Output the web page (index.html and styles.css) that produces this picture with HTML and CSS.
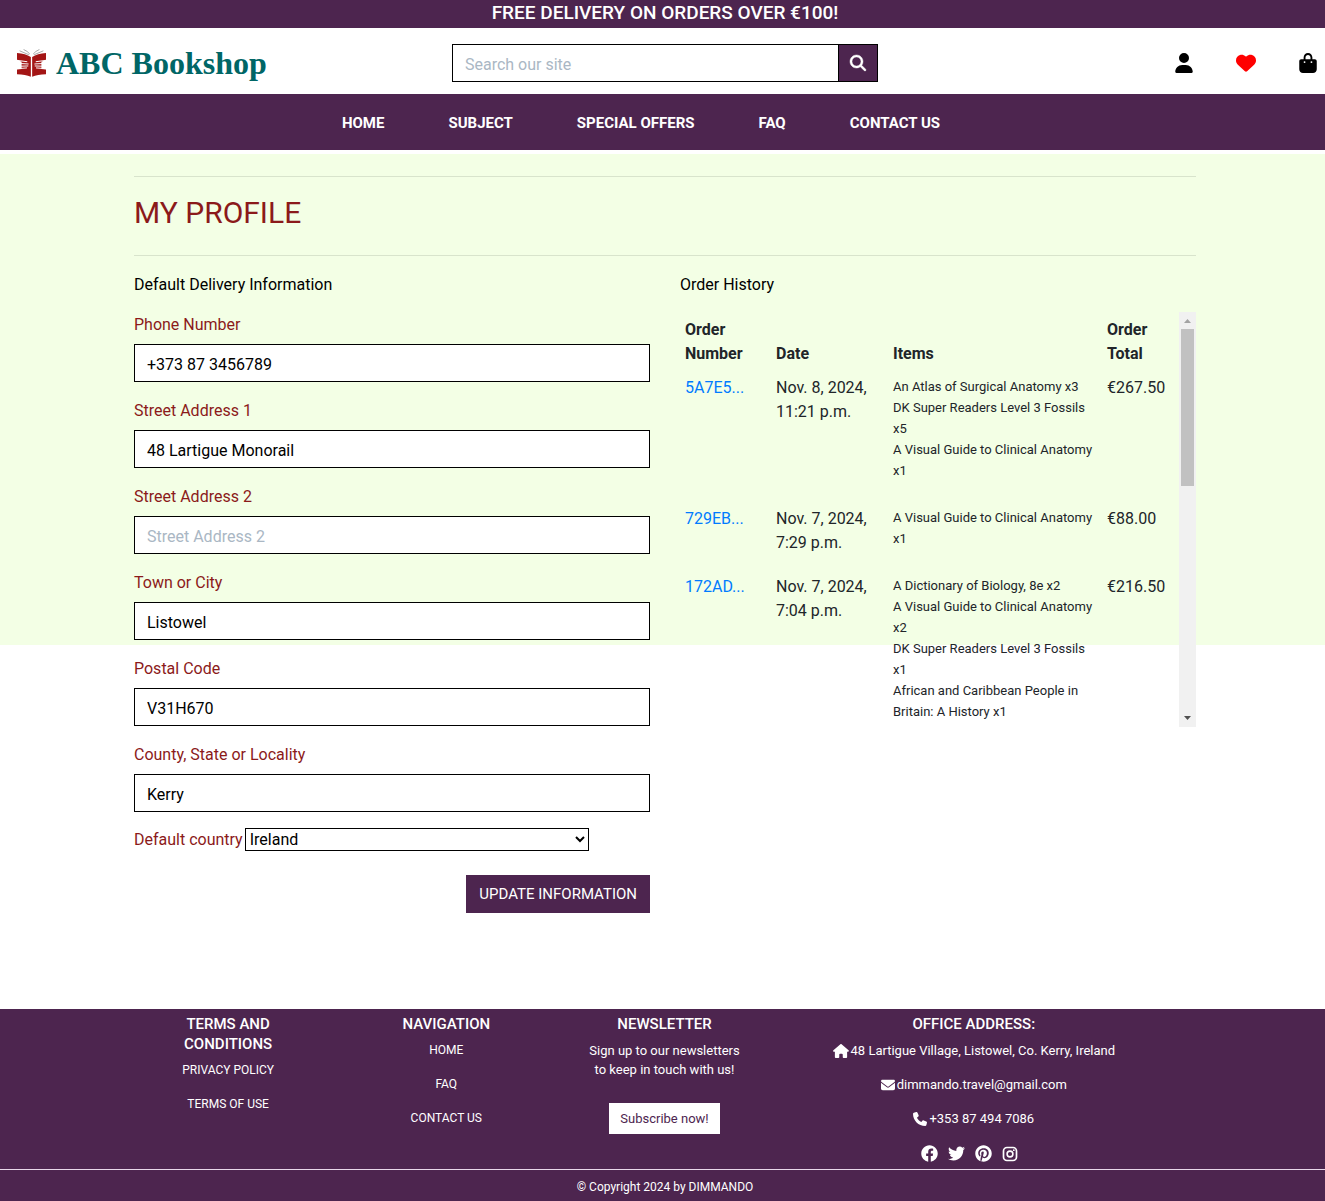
FILE: index.html
```html
<!DOCTYPE html>
<html lang="en">
<head>
<meta charset="utf-8">
<meta name="viewport" content="width=device-width, initial-scale=1">
<title>ABC Bookshop - My Profile</title>
<link rel="stylesheet" href="styles.css">
</head>
<body>
<div class="banner">FREE DELIVERY ON ORDERS OVER €100!</div>

<header class="topbar">
  <a class="brand" href="#">
    <svg class="brand-mark" viewBox="0 0 88 84" aria-hidden="true">
      <g fill="none" stroke="#a8a8a8" stroke-width="3">
        <path d="M8 5L36 17M20 1Q32 6 39 15M80 5L52 17M68 1Q56 6 49 15"/>
      </g>
      <path fill="#a31515" d="M0 12Q26 14 42 24V84Q26 76 0 76ZM88 12Q62 14 46 24V84Q62 76 88 76Z"/>
      <g fill="none" stroke="#fff" stroke-width="3" stroke-linecap="round">
        <path d="M0 34L30 38M0 43L34 45M0 52L33 51M2 59L29 57M88 34L58 38M88 43L54 45M88 52L55 51M86 59L59 57"/>
      </g>
      <path fill="#fff" d="M0 32L14 38V60L0 62ZM88 32L74 38V60L88 62Z"/>
    </svg>
    <span>ABC Bookshop</span>
  </a>
  <form class="search" role="search">
    <input class="search-input" type="text" placeholder="Search our site" aria-label="Search our site">
    <button class="search-button" type="submit" aria-label="Search">
      <svg viewBox="0 0 512 512" width="16" height="16" aria-hidden="true"><path fill="currentColor" stroke="currentColor" stroke-width="14" d="M416 208c0 45.900-14.900 88.300-40 122.700L502.600 457.400c12.500 12.500 12.500 32.800 0 45.300s-32.800 12.500-45.300 0L330.700 376c-34.400 25.200-76.800 40-122.700 40C93.100 416 0 322.900 0 208S93.100 0 208 0S416 93.100 416 208zM208 352a144 144 0 1 0 0-288 144 144 0 1 0 0 288z"/></svg>
    </button>
  </form>
  <div class="account">
    <a href="#" aria-label="My account"><svg viewBox="0 0 448 512" width="18" height="20" aria-hidden="true"><path fill="currentColor" d="M224 256A128 128 0 1 0 224 0a128 128 0 1 0 0 256zm-45.700 48C79.800 304 0 383.800 0 482.300C0 498.700 13.300 512 29.700 512H418.300c16.400 0 29.700-13.300 29.700-29.700C448 383.800 368.200 304 269.700 304H178.300z"/></svg></a>
    <a class="wishlist" href="#" aria-label="Wishlist"><svg viewBox="0 0 512 512" width="20" height="20" aria-hidden="true"><path fill="currentColor" d="M47.600 300.400L228.300 469.100c7.500 7 17.400 10.900 27.700 10.900s20.200-3.900 27.700-10.900L464.400 300.400c30.400-28.300 47.600-68 47.600-109.500v-5.800c0-69.900-50.500-129.500-119.400-141C347 36.500 300.600 51.400 268 84L256 96 244 84c-32.600-32.600-79-47.500-124.600-39.900C50.500 55.600 0 115.200 0 185.100v5.800c0 41.500 17.200 81.200 47.600 109.500z"/></svg></a>
    <a href="#" aria-label="Shopping bag"><svg viewBox="0 0 448 512" width="18" height="20" aria-hidden="true"><path fill="currentColor" d="M160 112c0-35.300 28.700-64 64-64s64 28.700 64 64v48H160V112zm-48 48H48c-26.500 0-48 21.500-48 48V416c0 53 43 96 96 96H352c53 0 96-43 96-96V208c0-26.500-21.500-48-48-48H336V112C336 50.100 285.900 0 224 0S112 50.100 112 112v48zm24 48a24 24 0 1 1 0 48 24 24 0 1 1 0-48zm152 24a24 24 0 1 1 48 0 24 24 0 1 1 -48 0z"/></svg></a>
  </div>
</header>

<nav class="mainnav" aria-label="Main">
  <a href="#">HOME</a>
  <a href="#">SUBJECT</a>
  <a href="#">SPECIAL OFFERS</a>
  <a href="#">FAQ</a>
  <a href="#">CONTACT US</a>
</nav>

<main class="profile">
  <h1 class="page-title">MY PROFILE</h1>
  <div class="columns">
    <section>
      <h2 class="section-title">Default Delivery Information</h2>
      <form class="delivery">
        <label for="phone">Phone Number</label>
        <input id="phone" type="text" value="+373 87 3456789">
        <label for="street1">Street Address 1</label>
        <input id="street1" type="text" value="48 Lartigue Monorail">
        <label for="street2">Street Address 2</label>
        <input id="street2" type="text" placeholder="Street Address 2">
        <label for="town">Town or City</label>
        <input id="town" type="text" value="Listowel">
        <label for="postcode">Postal Code</label>
        <input id="postcode" type="text" value="V31H670">
        <label for="county">County, State or Locality</label>
        <input id="county" type="text" value="Kerry">
        <div class="country">
          <label for="country">Default country</label>
          <select id="country"><option>Ireland</option></select>
        </div>
        <button class="update" type="submit">UPDATE INFORMATION</button>
      </form>
    </section>
    <section>
      <h2 class="section-title">Order History</h2>
      <div class="history">
        <table>
          <colgroup><col class="c-number"><col class="c-date"><col class="c-items"><col class="c-total"></colgroup>
          <thead>
            <tr><th>Order Number</th><th>Date</th><th>Items</th><th>Order Total</th></tr>
          </thead>
          <tbody>
            <tr>
              <td><a href="#">5A7E5...</a></td>
              <td>Nov. 8, 2024, 11:21 p.m.</td>
              <td><ul><li>An Atlas of Surgical Anatomy x3</li><li>DK Super Readers Level 3 Fossils x5</li><li>A Visual Guide to Clinical Anatomy x1</li></ul></td>
              <td>€267.50</td>
            </tr>
            <tr>
              <td><a href="#">729EB...</a></td>
              <td>Nov. 7, 2024, 7:29 p.m.</td>
              <td><ul><li>A Visual Guide to Clinical Anatomy x1</li></ul></td>
              <td>€88.00</td>
            </tr>
            <tr>
              <td><a href="#">172AD...</a></td>
              <td>Nov. 7, 2024, 7:04 p.m.</td>
              <td><ul><li>A Dictionary of Biology, 8e x2</li><li>A Visual Guide to Clinical Anatomy x2</li><li>DK Super Readers Level 3 Fossils x1</li><li>African and Caribbean People in Britain: A History x1</li></ul></td>
              <td>€216.50</td>
            </tr>
          </tbody>
        </table>
        <div class="scrollbar" aria-hidden="true">
          <svg viewBox="0 0 17 17" width="17" height="17"><path fill="#a3a3a3" d="M5 11L8.500 7L12 11Z"/></svg>
          <div class="scroll-track"><div class="scroll-thumb"></div></div>
          <svg viewBox="0 0 17 17" width="17" height="17"><path fill="#505050" d="M5 6L8.500 10L12 6Z"/></svg>
        </div>
      </div>
    </section>
  </div>
</main>

<footer class="footer">
  <div class="footer-columns">
    <section>
      <h3>TERMS AND<br>CONDITIONS</h3>
      <ul class="footer-list links">
        <li><a href="#">PRIVACY POLICY</a></li>
        <li><a href="#">TERMS OF USE</a></li>
      </ul>
    </section>
    <section>
      <h3>NAVIGATION</h3>
      <ul class="footer-list links">
        <li><a href="#">HOME</a></li>
        <li><a href="#">FAQ</a></li>
        <li><a href="#">CONTACT US</a></li>
      </ul>
    </section>
    <section>
      <h3>NEWSLETTER</h3>
      <p>Sign up to our newsletters<br>to keep in touch with us!</p>
      <button class="subscribe" type="button">Subscribe now!</button>
    </section>
    <section>
      <h3>OFFICE ADDRESS:</h3>
      <ul class="footer-list">
        <li><svg viewBox="0 0 576 512" width="16" height="14" aria-hidden="true"><path fill="currentColor" d="M575.800 255.500c0 18-15 32.100-32 32.100h-32l.700 160.200c0 2.700-.200 5.400-.500 8.100V472c0 22.100-17.900 40-40 40H392c-22.100 0-40-17.900-40-40V384c0-17.700-14.300-32-32-32H256c-17.700 0-32 14.300-32 32v88c0 22.100-17.900 40-40 40H104c-22.100 0-40-17.900-40-40V287.600H32c-18 0-32-14-32-32.100c0-9 3-17 10-24L266.400 8c7-7 15-8 22-8s15 2 21 7L564.800 231.500c8 7 12 15 11 24z"/></svg><span>48 Lartigue Village, Listowel, Co. Kerry, Ireland</span></li>
        <li><svg viewBox="0 0 512 512" width="14" height="14" aria-hidden="true"><path fill="currentColor" d="M48 64C21.500 64 0 85.500 0 112c0 15.100 7.100 29.300 19.200 38.400L236.800 313.600c11.400 8.500 27 8.500 38.400 0L492.800 150.400c12.100-9.100 19.200-23.300 19.200-38.400c0-26.500-21.500-48-48-48H48zM0 176V384c0 35.300 28.700 64 64 64H448c35.300 0 64-28.700 64-64V176L294.400 339.200c-22.800 17.100-54 17.100-76.800 0L0 176z"/></svg><a href="mailto:dimmando.travel@gmail.com">dimmando.travel@gmail.com</a></li>
        <li><svg viewBox="0 0 512 512" width="14" height="14" aria-hidden="true"><path fill="currentColor" d="M164.900 24.600c-7.700-18.600-28-28.500-47.400-23.200l-88 24C12.100 30.200 0 46 0 64C0 311.400 200.600 512 448 512c18 0 33.800-12.100 38.600-29.500l24-88c5.300-19.400-4.600-39.700-23.200-47.400l-96-40c-16.300-6.800-35.200-2.100-46.300 11.600L304.700 368C234.300 334.700 177.300 277.700 144 207.300L193.300 167c13.700-11.200 18.400-30 11.600-46.300l-40-96z"/></svg><span>+353 87 494 7086</span></li>
      </ul>
      <div class="social">
        <a href="#" aria-label="Facebook"><svg viewBox="0 0 512 512" width="17" height="17" aria-hidden="true"><path fill="currentColor" d="M504 256C504 119 393 8 256 8S8 119 8 256c0 123.780 90.690 226.380 209.250 245V327.690h-63V256h63v-54.640c0-62.150 37-96.480 93.670-96.480 27.140 0 55.520 4.840 55.520 4.840v61h-31.280c-30.800 0-40.410 19.120-40.410 38.730V256h68.780l-11 71.690h-57.780V501C413.310 482.380 504 379.780 504 256z"/></svg></a>
        <a href="#" aria-label="Twitter"><svg viewBox="0 0 512 512" width="17" height="17" aria-hidden="true"><path fill="currentColor" d="M459.370 151.716c.325 4.548.325 9.097.325 13.645 0 138.720-105.583 298.558-298.558 298.558-59.452 0-114.680-17.219-161.137-47.106 8.447.974 16.568 1.299 25.340 1.299 49.055 0 94.213-16.568 130.274-44.832-46.132-.975-84.792-31.188-98.112-72.772 6.498.974 12.995 1.624 19.818 1.624 9.421 0 18.843-1.300 27.614-3.573-48.081-9.747-84.143-51.980-84.143-102.985v-1.299c13.969 7.797 30.214 12.670 47.431 13.319-28.264-18.843-46.781-51.005-46.781-87.391 0-19.492 5.197-37.360 14.294-52.954 51.655 63.675 129.300 105.258 216.365 109.807-1.624-7.797-2.599-15.918-2.599-24.040 0-57.828 46.782-104.934 104.934-104.934 30.213 0 57.502 12.670 76.670 33.137 23.715-4.548 46.456-13.320 66.599-25.340-7.798 24.366-24.366 44.833-46.132 57.827 21.117-2.273 41.584-8.122 60.426-16.243-14.292 20.791-32.161 39.308-52.628 54.253z"/></svg></a>
        <a href="#" aria-label="Pinterest"><svg viewBox="-8 0 512 512" width="17" height="17" aria-hidden="true"><path fill="currentColor" d="M496 256c0 137-111 248-248 248-25.600 0-50.200-3.900-73.400-11.100 10.100-16.500 25.200-43.500 30.800-65 3-11.600 15.400-59 15.400-59 8.100 15.400 31.700 28.500 56.800 28.500 74.800 0 128.700-68.800 128.700-154.300 0-81.900-66.900-143.200-152.900-143.200-107 0-163.900 71.800-163.900 150.100 0 36.400 19.400 81.700 50.300 96.100 4.700 2.200 7.200 1.200 8.300-3.300.8-3.400 5-20.300 6.900-28.100.6-2.500.3-4.700-1.700-7.100-10.100-12.500-18.300-35.300-18.300-56.600 0-54.700 41.400-107.600 112-107.600 60.900 0 103.600 41.500 103.600 100.900 0 67.100-33.900 113.600-78 113.600-24.300 0-42.600-20.100-36.700-44.800 7-29.500 20.500-61.300 20.500-82.600 0-19-10.200-34.900-31.400-34.900-24.900 0-44.900 25.700-44.900 60.200 0 22 7.400 36.800 7.400 36.800s-24.500 103.800-29 123.200c-5 21.400-3 51.600-.9 71.200C65.400 450.900 0 361.100 0 256 0 119 111 8 248 8s248 111 248 248z"/></svg></a>
        <a href="#" aria-label="Instagram"><svg viewBox="0 0 16 16" width="16" height="16" aria-hidden="true"><rect x="1.500" y="1.500" width="13" height="13" rx="3.500" fill="none" stroke="currentColor" stroke-width="1.700"/><circle cx="8" cy="8" r="2.900" fill="none" stroke="currentColor" stroke-width="1.600"/><circle cx="11.800" cy="4.200" r="0.900" fill="currentColor"/></svg></a>
      </div>
    </section>
  </div>
  <p class="copyright">© Copyright 2024 by DIMMANDO</p>
</footer>
</body>
</html>
```
FILE: styles.css
```css
* {
  box-sizing: border-box;
}

body {
  margin: 0;
  color: #212529;
  background: #fff;
  font: 16px/24px Roboto, "Liberation Sans", sans-serif;
}

h1, h2, h3, p, ul {
  margin: 0;
  padding: 0;
  font-weight: 400;
}

ul {
  list-style: none;
}

a {
  color: #007bff;
  text-decoration: none;
}

input, select, button {
  margin: 0;
  font: inherit;
  color: #000;
  border: 1px solid #000;
  border-radius: 0;
}

input {
  height: 38px;
  padding: 8px 12px 6px;
  background: #fff;
}

input::placeholder {
  color: #aab7c4;
}

svg {
  display: block;
}

.banner {
  padding: 0 0 2px 5px;
  line-height: 26px;
  font-size: 19px;
  font-weight: 500;
  text-align: center;
  color: #fff;
  background: #4d254f;
}

.topbar {
  display: grid;
  grid-template-columns: 1fr 426px 1fr;
  align-items: center;
  min-height: 66px;
  padding: 4px 8px 0 13px;
}

.brand {
  display: flex;
  align-items: center;
  gap: 10px;
  padding-left: 4px;
  color: #066;
  font: bold 32px/40px "Liberation Serif", serif;
}

.brand-mark {
  width: 29px;
  height: 28px;
}

.search {
  display: flex;
}

.search-input {
  flex: 1;
  min-width: 0;
}

.search-button {
  display: grid;
  place-items: center;
  width: 40px;
  margin-left: -1px;
  padding: 0;
  color: #fff;
  background: #4d254f;
}

.search-button svg {
  overflow: visible;
}

.account {
  display: flex;
  justify-content: flex-end;
  align-items: center;
  gap: 43px;
}

.account a {
  color: #000;
}

.account .wishlist {
  color: #f00;
}

.mainnav {
  display: flex;
  justify-content: center;
  gap: 64px;
  padding: 17px 43px 15px 0;
  font-size: 15px;
  font-weight: 700;
  background: #4d254f;
}

.mainnav a {
  color: #fff;
}

.profile {
  margin-top: 4px;
  padding: 22px 129px 96px 134px;
  background: linear-gradient(#f3ffe5, #f3ffe5) 0 0 / 100% 491px no-repeat;
}

.page-title {
  height: 80px;
  padding-top: 16px;
  border: solid #d8e4cc;
  border-width: 1px 0;
  font-size: 30px;
  line-height: 40px;
  color: #8b1a1a;
}

.columns {
  display: grid;
  grid-template-columns: 1fr 1fr;
  gap: 30px;
  padding-top: 17px;
}

.section-title {
  margin-bottom: 15px;
  font-size: 16px;
  color: #000;
}

.delivery {
  display: flex;
  flex-direction: column;
}

.delivery label {
  line-height: 26px;
  color: #8b1a1a;
}

.delivery input {
  margin: 6px 0 16px;
}

.country {
  display: flex;
  gap: 2px;
  height: 23px;
}

.delivery .country label {
  line-height: 24px;
}

.country select {
  width: 344px;
  padding: 0;
  background: #fff;
}

.update {
  align-self: flex-end;
  height: 38px;
  margin-top: 24px;
  padding: 0 13px;
  border: 0;
  font-size: 15px;
  color: #fff;
  background: #4d254f;
}

.history {
  display: flex;
  align-items: flex-start;
  height: 415px;
  overflow: hidden;
}

.scrollbar {
  display: flex;
  flex-direction: column;
  align-self: stretch;
  width: 17px;
  background: #f1f1f1;
}

.scroll-track {
  flex: 1;
  padding: 0 2px;
}

.scroll-thumb {
  height: 157px;
  background: #c1c1c1;
}

table {
  flex: 1;
  min-width: 0;
  width: 100%;
  margin-top: 1px;
  table-layout: fixed;
  border-collapse: collapse;
}

.c-number {
  width: 91px;
}

.c-date {
  width: 117px;
}

.c-total {
  width: 77px;
}

th, td {
  padding: 5px;
  text-align: left;
  vertical-align: top;
}

th {
  vertical-align: bottom;
}

td:last-child {
  padding-right: 0;
}

td ul {
  margin-bottom: 16px;
  font-size: 13px;
  line-height: 21px;
}

.footer {
  font-size: 13px;
  line-height: 19px;
  text-align: center;
  color: #fff;
  background: #4d254f;
}

.footer a {
  color: #fff;
}

.footer-columns {
  display: grid;
  grid-template-columns: 218fr 218fr 218fr 400fr;
  padding: 5px 151px 7px 119px;
}

.footer h3 {
  margin-bottom: 7px;
  font-size: 15px;
  line-height: 20px;
  font-weight: 500;
}

.footer-list {
  display: flex;
  flex-direction: column;
  gap: 15px;
}

.links {
  font-size: 12px;
}

.footer-list li {
  display: flex;
  justify-content: center;
  align-items: center;
  gap: 2px;
}

.subscribe {
  height: 31px;
  margin-top: 24px;
  padding: 0 11px;
  border: 0;
  color: #4d254f;
  background: #fff;
}

.social {
  display: flex;
  justify-content: center;
  align-items: center;
  gap: 10px;
  margin-top: 17px;
  padding-right: 8px;
}

.copyright {
  padding: 8px 0 4px 5px;
  border-top: 1px solid #e8d8ea;
  font-size: 12px;
}
```
